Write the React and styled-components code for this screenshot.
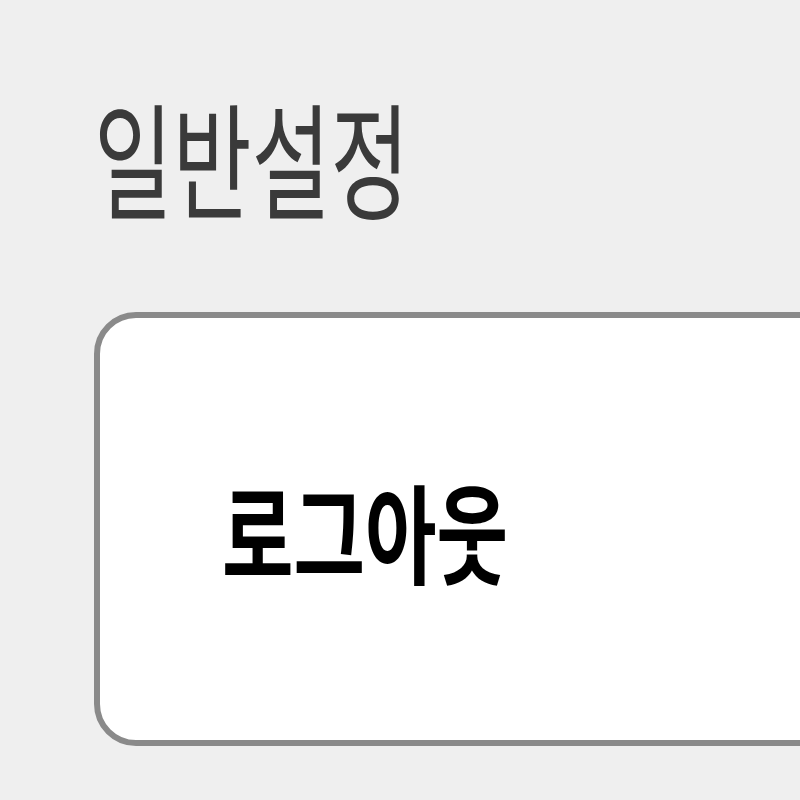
import React from "react";
import styled, { createGlobalStyle } from "styled-components";

const GlobalStyle = createGlobalStyle`
  html, body {
    margin: 0;
    padding: 0;
    background: #efefef;
    overflow: hidden;
  }
`;

function App() {
  return (
    <>
      <GlobalStyle />
      <Page>
        <SectionTitle>일반설정</SectionTitle>
        <Card>
          <CardLabel>로그아웃</CardLabel>
        </Card>
      </Page>
    </>
  );
}

export default App;

const Page = styled.div`
  width: 800px;
  height: 800px;
  overflow: hidden;
  box-sizing: border-box;
  padding: 85px 0 0 94px;
  display: flex;
  flex-direction: column;
  font-family: "Noto Sans CJK KR", "Noto Sans", sans-serif;
`;

const SectionTitle = styled.h2`
  margin: 0;
  font-size: 126px;
  line-height: 140px;
  font-weight: 400;
  color: #3a3a3a;
  transform: scaleX(0.68);
  transform-origin: left center;
  white-space: nowrap;
`;

const Card = styled.div`
  margin-top: 87px;
  width: 900px;
  height: 434px;
  box-sizing: border-box;
  background: #ffffff;
  border: 6px solid #8a8a8a;
  border-radius: 42px;
  display: flex;
  align-items: center;
  padding-left: 122px;
  flex-shrink: 0;
`;

const CardLabel = styled.span`
  font-size: 108px;
  font-weight: 700;
  color: #000;
  transform: scaleX(0.72);
  transform-origin: left center;
  white-space: nowrap;
`;
